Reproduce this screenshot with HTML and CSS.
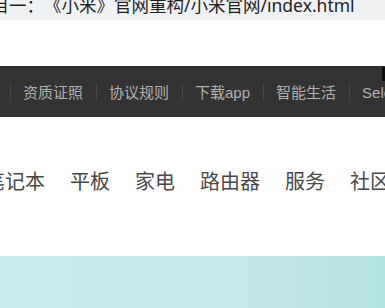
FILE: index.html
```html
<!DOCTYPE html>
<html lang="zh-CN">
<head>
    <meta charset="UTF-8">
    <meta name="viewport" content="width=device-width, initial-scale=1.0">
    <title>小米官网</title>
    <link rel="stylesheet" href="styles.css">
</head>
<body>
    <div class="tab-title">
        <span class="path">项目一：《小米》官网重构/小米官网/index.html</span>
    </div>

    <div class="gap"></div>

    <div class="topbar">
        <ul class="topbar-nav">
            <li><a href="#">资质证照</a></li>
            <li><a href="#">协议规则</a></li>
            <li><a href="#">下载app</a></li>
            <li><a href="#">智能生活</a></li>
            <li><a href="#">Select Location</a></li>
        </ul>
        <div class="topbar-cart"></div>
    </div>

    <div class="header">
        <ul class="header-nav">
            <li><a href="#">笔记本</a></li>
            <li><a href="#">平板</a></li>
            <li><a href="#">家电</a></li>
            <li><a href="#">路由器</a></li>
            <li><a href="#">服务</a></li>
            <li><a href="#">社区</a></li>
        </ul>
    </div>

    <div class="banner"></div>
</body>
</html>
```

FILE: styles.css
```css
* {
    margin: 0;
    padding: 0;
    box-sizing: border-box;
}
body {
    font-family: 'Liberation Sans', 'Noto Sans CJK SC', sans-serif;
    background-color: #fff;
    overflow: hidden;
    white-space: nowrap;
    text-spacing-trim: space-all;
}
ul {
    list-style: none;
}
a {
    text-decoration: none;
    color: inherit;
}

/* bande grise du haut */
.tab-title {
    height: 20px;
    background-color: #f0f1f3;
    overflow: hidden;
}
.tab-title .path {
    display: block;
    margin-top: -6px;
    margin-left: -26px;
    font-family: 'Noto Sans', 'Noto Sans CJK SC', sans-serif;
    font-size: 17.5px;
    line-height: 22px;
    color: #1f1f1f;
}

.gap {
    height: 46px;
}

/* barre noire */
.topbar {
    position: relative;
    height: 51px;
    background-color: #333;
    display: flex;
    align-items: center;
    overflow: hidden;
}
.topbar-nav {
    display: flex;
    padding-left: 10px;
    margin-top: 1px;
}
.topbar-nav li {
    border-left: 1px solid #474747;
    padding: 0 13px 0 12px;
    font-size: 15px;
    line-height: 17px;
    color: #b0b0b0;
}
.topbar-cart {
    position: absolute;
    top: 1px;
    right: 0;
    width: 3px;
    height: 14px;
    background-color: #0d0d0d;
}

/* navigation principale */
.header {
    height: 139px;
    display: flex;
    align-items: center;
    overflow: hidden;
}
.header-nav {
    display: flex;
    gap: 25px;
    margin-left: -15px;
    margin-top: -12px;
}
.header-nav li {
    font-size: 20px;
    color: #484848;
}

.banner {
    height: 60px;
    background: linear-gradient(90deg, #c8ebeb 0%, #c4e9e9 60%, #b5e4e2 100%);
}
```
